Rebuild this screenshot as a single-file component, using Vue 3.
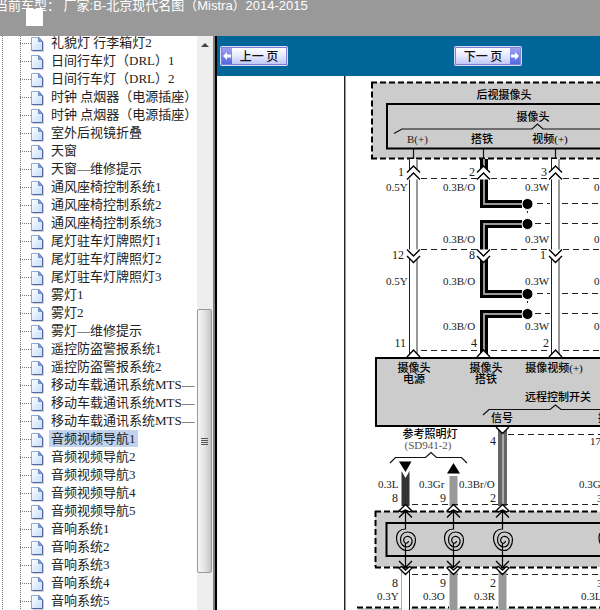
<script setup>
import { ref } from 'vue'

const items = [
  '礼貌灯 行李箱灯2', '日间行车灯（DRL）1', '日间行车灯（DRL）2',
  '时钟 点烟器（电源插座）', '时钟 点烟器（电源插座）', '室外后视镜折叠',
  '天窗', '天窗—维修提示', '通风座椅控制系统1', '通风座椅控制系统2',
  '通风座椅控制系统3', '尾灯驻车灯牌照灯1', '尾灯驻车灯牌照灯2',
  '尾灯驻车灯牌照灯3', '雾灯1', '雾灯2', '雾灯—维修提示',
  '遥控防盗警报系统1', '遥控防盗警报系统2', '移动车载通讯系统MTS—1',
  '移动车载通讯系统MTS—2', '移动车载通讯系统MTS—3', '音频视频导航1',
  '音频视频导航2', '音频视频导航3', '音频视频导航4', '音频视频导航5',
  '音响系统1', '音响系统2', '音响系统3', '音响系统4', '音响系统5',
]
const selected = ref(22)

// Diagram labels: [x, baseline, text]
const wireLabels = [
  [386, 191, '0.5Y'], [443, 191, '0.3B/O'], [525, 191, '0.3W'], [594, 191, '0.3B'],
  [443, 243, '0.3B/O'], [525, 243, '0.3W'], [594, 243, '0.3B'],
  [386, 285, '0.5Y'], [443, 285, '0.3B/O'], [525, 285, '0.3W'], [594, 285, '0.3B'],
  [443, 330, '0.3B/O'], [525, 330, '0.3W'], [594, 330, '0.3B'],
  [378, 488, '0.3L'], [419, 488, '0.3Gr'], [459, 488, '0.3Br/O'], [579, 488, '0.3G'],
  [377, 600, '0.3Y'], [423, 600, '0.3O'], [474, 600, '0.3R'], [581, 600, '0.3L'],
  [407, 143, 'B(+)'], [590, 445, '17'], [597, 502, '3'], [597, 587, '3'],
]
const pinLabels = [
  [404, 176, '1'], [475, 176, '2'], [547, 176, '3'],
  [404, 259, '12'], [475, 259, '8'], [546, 259, '1'],
  [406, 347, '11'], [477, 347, '4'], [549, 347, '2'], [496, 445, '4'],
  [398, 502, '8'], [446, 502, '9'], [496, 502, '2'],
  [398, 587, '8'], [446, 587, '9'], [496, 587, '2'],
]
const names = [
  [504, 99, '后视摄像头'], [533, 121, '摄像头'], [482, 143, '搭铁'],
  [414, 372, '摄像头'], [414, 383, '电源'], [486, 372, '摄像头'], [486, 383, '搭铁'],
  [554, 372, '摄像视频(+)'], [550, 143, '视频(+)'], [558, 401, '远程控制开关'],
  [502, 422, '信号'], [609, 422, '接地'], [430, 438, '参考照明灯'],
]
const cameraPins = [413.5, 483.5, 555.5]
const lamps = [405.5, 453.5, 502.5, 608]
const splices = [204, 294]
</script>

<template>
  <div class="page">
    <header class="top">
      <span class="model">当前车型： 厂家:B-北京现代名图（Mistra）2014-2015</span>
      <span class="blank"></span>
    </header>
    <div class="body">
      <aside class="side">
        <nav class="tree">
          <ul>
            <li v-for="(item, i) in items" :key="i">
              <svg class="leaf" width="13" height="15" viewBox="0 0 13 15" aria-hidden="true">
                <defs>
                  <linearGradient id="sheet" x1="0" y1="0" x2="1" y2="1">
                    <stop offset="0" stop-color="#fff" />
                    <stop offset="1" stop-color="#c3dcfb" />
                  </linearGradient>
                </defs>
                <path d="M2 14.3H12.4V5" fill="none" stroke="#c4c6cc" />
                <path d="M.5.5H8L11.5 4.5V13.5H.5Z" fill="url(#sheet)" />
                <path d="M.5 13.5V.5H8" fill="none" stroke="#8fa9d8" />
                <path d="M8 .5L11.5 4.5V13.5H.5" fill="none" stroke="#5468a4" />
                <path d="M7.5.5V4.5H11.5Z" fill="#7da2dc" stroke="#5c79b8" stroke-width=".7" />
              </svg>
              <a href="#" :class="{ on: i === selected }" @click.prevent="selected = i">{{ item }}</a>
            </li>
          </ul>
        </nav>
        <div class="scroll">
          <svg class="up" width="8" height="4" viewBox="0 0 8 4" aria-hidden="true"><path d="M0 4L4 0L8 4Z" fill="#444" /></svg>
          <div class="thumb"><i></i><i></i><i></i><i></i></div>
        </div>
      </aside>
      <main class="main">
        <div class="pager">
          <button type="button">
            <span class="cap"><svg width="8" height="8" viewBox="0 0 8 8" aria-hidden="true"><path d="M0 4L4 0V2.500H8V5.500H4V8Z" fill="#fff" /></svg></span>
            <span class="word">上一 页</span>
          </button>
          <button type="button">
            <span class="word">下一 页</span>
            <span class="cap"><svg width="8" height="8" viewBox="0 0 8 8" aria-hidden="true"><path d="M8 4L4 0V2.500H0V5.500H4V8Z" fill="#fff" /></svg></span>
          </button>
        </div>
        <div class="sheet">
          <svg class="diagram" width="683" height="634" viewBox="217 76 683 634" role="img" aria-label="音频视频导航1">
            <path d="M344.5 76V710" stroke="#222" />
            <path d="M345.5 76V710" stroke="#999" />

            <!-- rear camera -->
            <rect x="372" y="82.5" width="500" height="76" fill="#ccc" />
            <path class="heavy" d="M372 82.5V158.5" />
            <path class="heavy" d="M371 82.5H872" />
            <path class="heavy" d="M371 158.5H872" />
            <rect class="frame" x="387" y="104" width="460" height="44.5" />
            <path class="brace" d="M394 133.5L402 129H532L537.5 124L543 129H872" />
            <path v-for="x in cameraPins" :key="x" class="brace" :d="`M${x} 149V160`" />

            <!-- camera wires -->
            <g v-for="x in [413.5, 555.5]" :key="x">
              <rect :x="x - 4" y="159" width="8" height="198" fill="#fff" />
              <path :d="`M${x - 4} 159V357`" stroke="#222" />
              <path :d="`M${x + 3.5} 159V357`" stroke="#999" stroke-width="2" />
            </g>
            <g fill="none">
              <path class="black" d="M484 159V204H522" />
              <path class="black" d="M522 224H484V294H522" />
              <path class="black" d="M522 314H484V357" />
              <path class="core" d="M484 159V204H522" />
              <path class="core" d="M522 224H484V294H522" />
              <path class="core" d="M522 314H484V357" />
            </g>

            <!-- connectors -->
            <g v-for="x in cameraPins" :key="'c' + x" fill="#fff">
              <path :d="`M${x - 7} 173L${x} 166L${x + 7} 173V179L${x} 173L${x - 7} 179Z`" />
              <path :d="`M${x - 7} 249L${x} 256L${x + 7} 249V256L${x} 262L${x - 7} 256Z`" />
              <path class="tip" :d="`M${x - 6.5} 172.5L${x} 166L${x + 6.5} 172.5M${x - 6.5} 179.5L${x} 173L${x + 6.5} 179.5`" />
              <path class="tip" :d="`M${x - 6.5} 249.5L${x} 256L${x + 6.5} 249.5M${x - 6.5} 256L${x} 262.5L${x + 6.5} 256`" />
            </g>
            <path v-for="y in [178.5, 249.5, 350.5]" :key="y" class="light" :d="`M421 ${y}H477M491 ${y}H549M563 ${y}H872`" />
            <g v-for="y in splices" :key="'s' + y">
              <path class="light" :d="`M537 ${y - .5}H550M562 ${y - .5}H872`" />
              <path class="light" :d="`M535 ${y + 19.5}H550M562 ${y + 19.5}H872`" />
              <circle cx="527.5" :cy="y" r="5.5" fill="#000" stroke="#fff" />
              <circle cx="527.5" :cy="y + 20" r="5.5" fill="#000" stroke="#fff" />
              <path :d="`M527.5 ${y + 7}V${y + 9}`" stroke="#222" />
            </g>

            <!-- remote control switch -->
            <rect class="frame" x="376" y="358" width="500" height="68" />
            <path v-for="x in cameraPins" :key="'t' + x" class="tip" fill="#fff" :d="`M${x - 6.5} 357L${x} 350L${x + 6.5} 357`" />
            <path class="brace" d="M483 415L489 409.5H550L555.5 405L561 409.5H872" />

            <!-- signal wire -->
            <rect x="498" y="430" width="9" height="76" fill="#666" />
            <path d="M503 430V506" stroke="#aaa" stroke-width="2" />
            <path class="tip" fill="#fff" d="M496 427L502.5 433.5L509 427" />
            <path class="light" d="M508 434.5H872" />

            <!-- reference lighting -->
            <path class="brace" d="M390 463L395.5 457.5H425.5L431 452.5L436.5 457.5H461.5L467 463" />
            <path d="M399 461.5H411.5L405.5 472Z" />
            <path d="M401.5 471L405.5 478L409.5 471V506H401.5Z" fill="#333" />
            <path d="M447 473.5H460L453.5 463Z" />
            <rect x="449.5" y="476" width="8" height="30" fill="#999" />

            <!-- lamp block -->
            <path class="light" d="M412 504.5H872" />
            <path class="light" d="M412 574.5H872" />
            <rect x="375" y="511.5" width="500" height="55.5" fill="#ccc" />
            <path class="heavy" d="M375.5 511V567" />
            <path class="heavy" d="M375 511.5H872" />
            <path class="heavy" d="M375 567.5H872" />
            <rect class="frame" x="386.5" y="523" width="480" height="33" />
            <rect x="402" y="570" width="7" height="120" fill="#fff" />
            <path d="M401.5 570V690" stroke="#aaa" />
            <path d="M409.5 570V690" stroke="#222" />
            <rect x="449.5" y="570" width="8" height="120" fill="#999" />
            <rect x="498.5" y="570" width="8" height="120" fill="#999" />
            <g v-for="x in lamps" :key="'l' + x" :transform="`translate(${x} 540)`" fill="none">
              <path class="tip" fill="#fff" d="M-6.5 -29L0 -35.5L6.5 -29L4 -28L0 -30L-4 -28Z" />
              <path class="tip" d="M-6.5 -22.5L0 -29L6.5 -22.5" />
              <path class="tip" d="M-6.5 21L0 27.5L6.5 21" />
              <path class="tip" fill="#fff" d="M-6.5 28L0 34.5L6.5 28L4 26.5L0 30L-4 26.5Z" />
              <path class="coil" d="M0 -29V-11C-6 -11 -9 -7 -9 -2.500C-9 5 -4 10.500 1.500 10.500C7 10.500 10 5 10 -.5C10 -5 6 -8 2 -8C-3 -8 -5 -4 -5 0C-5 4 -2 7 1.500 7C5 7 7 3 6.500 0C6 -3 3 -4 1 -3.500C-2 -3 -2.500 1 -1 2.500C0 4 3 3 3 1M0 3V28" />
            </g>

            <!-- next block -->
            <rect x="358" y="608" width="43" height="60" fill="#ccc" />
            <rect x="411" y="608" width="38" height="60" fill="#ccc" />
            <rect x="458" y="608" width="40" height="60" fill="#ccc" />
            <rect x="507" y="608" width="300" height="60" fill="#ccc" />
            <path class="heavy" d="M357 607.5H400M412 607.5H449M460 607.5H498M509 607.5H872" />

            <text v-for="([x, y, t], i) in wireLabels" :key="'a' + i" :x="x" :y="y">{{ t }}</text>
            <text v-for="([x, y, t], i) in pinLabels" :key="'b' + i" class="pin" :x="x" :y="y">{{ t }}</text>
            <text v-for="([x, y, t], i) in names" :key="'n' + i" class="name" :x="x" :y="y">{{ t }}</text>
            <text class="code" x="428" y="449">(SD941-2)</text>
          </svg>
        </div>
      </main>
    </div>
  </div>
</template>

<style>
body {
  overflow: hidden;
}
</style>

<style scoped>
.page {
  display: flex;
  flex-direction: column;
  height: 100vh;
  overflow: hidden;
  background: #fff;
}
.top {
  position: relative;
  flex: none;
  height: 36px;
  overflow: hidden;
  background: #999;
}
.model {
  display: block;
  margin: -1px 0 0 -5px;
  color: #fff;
  font: 13px/14px "Liberation Sans", "Noto Sans CJK SC", sans-serif;
  white-space: nowrap;
}
.blank {
  position: absolute;
  left: 26px;
  top: 9px;
  width: 17px;
  height: 17px;
  background: #fff;
}
.body {
  display: flex;
  flex: 1;
  min-height: 0;
}
.side {
  display: flex;
  flex: none;
  width: 213px;
  margin-right: 2px;
  border-right: 2px solid #808080;
  box-shadow: 2px 0 0 #000;
}
.tree {
  flex: 1;
  min-width: 0;
  margin-right: 2px;
  padding-left: 2px;
  overflow: hidden;
}
.tree ul {
  margin: -2px 0 0;
  padding: 0 0 0 18px;
  list-style: none;
  background: repeating-linear-gradient(#777 0 1px, transparent 1px 2px) 0 0 / 1px 100% no-repeat;
}
.tree li {
  display: flex;
  align-items: flex-start;
  height: 18px;
  padding-left: 11px;
  white-space: nowrap;
  background:
    repeating-linear-gradient(#777 0 1px, transparent 1px 2px) 0 0 / 1px 100% no-repeat,
    repeating-linear-gradient(90deg, #777 0 1px, transparent 1px 2px) 0 9px / 11px 1px no-repeat;
}
.leaf {
  flex: none;
  margin: 3px 5px 0 0;
}
.tree a {
  padding: 0 2px;
  color: #222;
  font: 13px/17px "Liberation Serif", "Noto Sans CJK SC", serif;
  text-decoration: none;
}
.tree a.on {
  background: #c1d2ee;
}
.scroll {
  display: flex;
  flex-direction: column;
  align-items: flex-start;
  flex: none;
  width: 16px;
  background: #eee;
}
.up {
  flex: none;
  margin: 7px 0 0 4px;
}
.thumb {
  box-sizing: border-box;
  display: flex;
  flex-direction: column;
  align-items: center;
  justify-content: center;
  gap: 1px;
  width: 15px;
  height: 46%;
  margin-top: 262px;
  border: 1px solid #999;
  border-radius: 2px;
  background: linear-gradient(90deg, #f6f6f6, #e4e4e4 50%, #c4c4c8);
}
.thumb i {
  width: 7px;
  height: 1px;
  background: #555;
}
.main {
  display: flex;
  flex-direction: column;
  flex: 1;
  min-width: 0;
}
.pager {
  display: flex;
  flex: none;
  align-items: center;
  gap: 168px;
  height: 40px;
  padding-left: 4px;
  background: #069;
}
.pager button {
  display: flex;
  flex: none;
  align-items: center;
  box-sizing: border-box;
  width: 66px;
  height: 18px;
  padding: 0;
  border: 1px solid #8080dc;
  border-radius: 1px;
  box-shadow: 0 0 0 1px #dcdcf4;
  background: linear-gradient(#fff, #e8ecff 45%, #c0c8f8);
  color: #111;
  font: 500 12px/16px "Noto Sans CJK SC", sans-serif;
  cursor: pointer;
}
.cap {
  display: flex;
  align-items: center;
  justify-content: center;
  flex: none;
  width: 10px;
  height: 16px;
  background: linear-gradient(#a0a0ec, #5068dc);
}
.word {
  flex: 1;
  text-align: center;
  white-space: pre;
}
.sheet {
  flex: 1;
  min-height: 0;
  overflow: hidden;
}
.diagram {
  display: block;
}
.diagram text {
  fill: #222;
  font: 11px "Liberation Serif", "Noto Sans CJK SC", serif;
}
.diagram .pin {
  font-size: 12px;
  text-anchor: end;
}
.diagram .name {
  fill: #000;
  font-weight: 500;
  text-anchor: middle;
}
.diagram .code {
  fill: #555;
  text-anchor: middle;
}
.heavy {
  fill: none;
  stroke: #000;
  stroke-width: 2;
  stroke-dasharray: 6 3;
}
.light {
  fill: none;
  stroke: #222;
  stroke-dasharray: 6 4;
}
.frame {
  stroke: #000;
  stroke-width: 2;
  fill: #ccc;
}
.brace {
  fill: none;
  stroke: #111;
  stroke-width: 1.2;
}
.tip {
  stroke: #000;
  stroke-width: 1.4;
}
.coil {
  stroke: #000;
  stroke-width: 1.2;
}
.black {
  stroke: #000;
  stroke-width: 8;
}
.core {
  stroke: #999;
  stroke-width: 2;
}
</style>
